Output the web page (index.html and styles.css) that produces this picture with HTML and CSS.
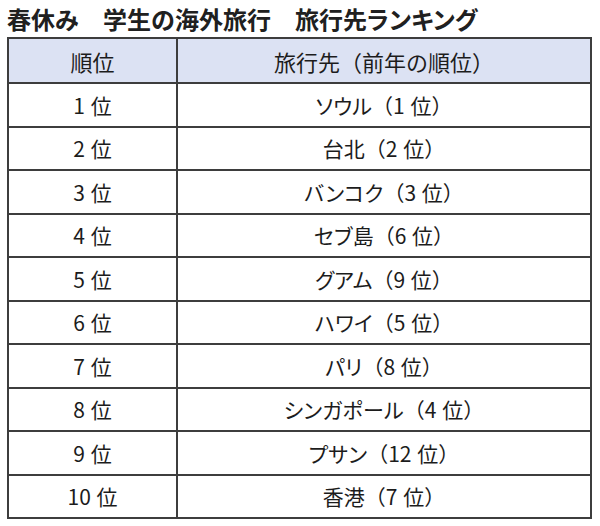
FILE: index.html
```html
<!DOCTYPE html>
<html lang="ja">
<head>
<meta charset="utf-8">
<title>春休み 学生の海外旅行 旅行先ランキング</title>
<link rel="stylesheet" href="styles.css">
</head>
<body>
<h1 class="title">春休み　学生の海外旅行　旅行先<span class="kana">ランキング</span></h1>
<table class="rank">
  <thead>
    <tr><th class="c1">順位</th><th class="c2">旅行先（前年の順位）</th></tr>
  </thead>
  <tbody>
    <tr><td>1 位</td><td><span class="kana">ソウル</span>（1 位）</td></tr>
    <tr><td>2 位</td><td>台北（2 位）</td></tr>
    <tr><td>3 位</td><td><span class="kana">バンコク</span>（3 位）</td></tr>
    <tr><td>4 位</td><td><span class="kana">セブ</span>島（6 位）</td></tr>
    <tr><td>5 位</td><td><span class="kana">グアム</span>（9 位）</td></tr>
    <tr><td>6 位</td><td><span class="kana">ハワイ</span>（5 位）</td></tr>
    <tr><td>7 位</td><td><span class="kana">パリ</span>（8 位）</td></tr>
    <tr><td>8 位</td><td><span class="kana">シンガポール</span>（4 位）</td></tr>
    <tr><td>9 位</td><td><span class="kana">プサン</span>（12 位）</td></tr>
    <tr><td>10 位</td><td>香港（7 位）</td></tr>
  </tbody>
</table>
</body>
</html>
```
FILE: styles.css
```css
html, body {
  margin: 0;
  padding: 0;
  background: #ffffff;
}
body {
  padding: 0 0 0 7px;
  font-family: "Noto Sans CJK JP", "Noto Sans", sans-serif;
  color: #1c1c1c;
}
.title {
  margin: 0;
  height: 37px;
  font-size: 24px;
  line-height: 38px;
  font-weight: 700;
  color: #202020;
  white-space: nowrap;
}
.kana {
  font-feature-settings: "palt" 1;
  letter-spacing: 0.2px;
}
.rank {
  border-collapse: collapse;
  width: 585px;
  table-layout: fixed;
}
.rank th, .rank td {
  border: 2px solid #3d3d3d;
  text-align: center;
  vertical-align: middle;
  font-size: 21px;
  font-weight: 400;
  padding: 0;
  line-height: 24px;
  word-spacing: 1px;
}
.rank thead tr {
  height: 45px;
}
.rank tbody tr {
  height: 43.5px;
}
.rank th {
  background: #dce2f3;
  font-size: 22px;
}
.rank .c1 {
  width: 167px;
}
```
